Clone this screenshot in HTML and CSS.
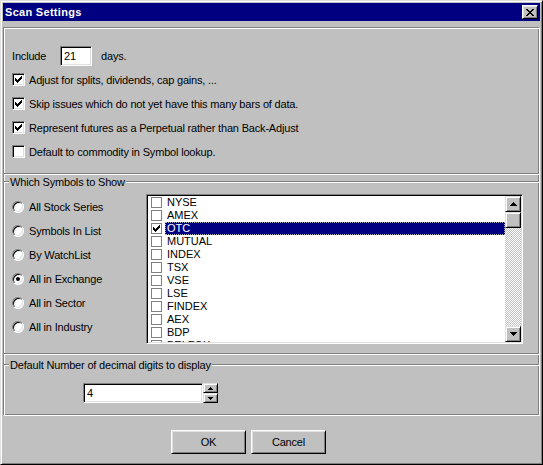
FILE: index.html
```html
<!DOCTYPE html>
<html>
<head>
<meta charset="utf-8">
<title>Scan Settings</title>
<link rel="stylesheet" href="styles.css">
</head>
<body>
<div class="window">
  <div class="titlebar">
    <span class="title">Scan Settings</span>
    <span class="close"><svg width="8" height="7" viewBox="0 0 8 7" shape-rendering="crispEdges"><path d="M0 0h2v1H0zM6 0h2v1H6zM1 1h2v1H1zM5 1h2v1H5zM2 2h4v1H2zM3 3h2v1H3zM2 4h4v1H2zM1 5h2v1H1zM5 5h2v1H5zM0 6h2v1H0zM6 6h2v1H6z" fill="#000"/></svg></span>
  </div>

  <div class="panel">
    <div class="general">
      <div class="include-row">
        <span class="include-label">Include</span>
        <span class="field days-field">21</span>
        <span class="days-label">days.</span>
      </div>
      <div class="checks">
        <div class="check-row"><span class="checkbox"><svg width="7" height="7" viewBox="0 0 7 7" shape-rendering="crispEdges"><path d="M6 0h1v1H6zM5 1h2v1H5zM0 2h1v1H0zM4 2h3v1H4zM0 3h2v1H0zM3 3h3v1H3zM0 4h5v1H0zM1 5h3v1H1zM2 6h1v1H2z"/></svg></span><span>Adjust for splits, dividends, cap gains, ...</span></div>
        <div class="check-row"><span class="checkbox"><svg width="7" height="7" viewBox="0 0 7 7" shape-rendering="crispEdges"><path d="M6 0h1v1H6zM5 1h2v1H5zM0 2h1v1H0zM4 2h3v1H4zM0 3h2v1H0zM3 3h3v1H3zM0 4h5v1H0zM1 5h3v1H1zM2 6h1v1H2z"/></svg></span><span>Skip issues which do not yet have this many bars of data.</span></div>
        <div class="check-row"><span class="checkbox"><svg width="7" height="7" viewBox="0 0 7 7" shape-rendering="crispEdges"><path d="M6 0h1v1H6zM5 1h2v1H5zM0 2h1v1H0zM4 2h3v1H4zM0 3h2v1H0zM3 3h3v1H3zM0 4h5v1H0zM1 5h3v1H1zM2 6h1v1H2z"/></svg></span><span>Represent futures as a Perpetual rather than Back-Adjust</span></div>
        <div class="check-row"><span class="checkbox"></span><span>Default to commodity in Symbol lookup.</span></div>
      </div>
    </div>

    <div class="sep"></div>

    <div class="symbols">
      <div class="group-title"><span class="gline gline-left"></span><span class="gtext">Which Symbols to Show</span><span class="gline gline-right"></span></div>
      <div class="symbols-body">
        <div class="radios">
          <div class="radio-row"><span class="radio"></span><span>All Stock Series</span></div>
          <div class="radio-row"><span class="radio"></span><span>Symbols In List</span></div>
          <div class="radio-row"><span class="radio"></span><span>By WatchList</span></div>
          <div class="radio-row"><span class="radio radio-on"><span class="dot"></span></span><span>All in Exchange</span></div>
          <div class="radio-row"><span class="radio"></span><span>All in Sector</span></div>
          <div class="radio-row"><span class="radio"></span><span>All in Industry</span></div>
        </div>
        <div class="listbox">
          <div class="items">
            <div class="item"><span class="lcheck"></span><span class="ltext">NYSE</span></div>
            <div class="item"><span class="lcheck"></span><span class="ltext">AMEX</span></div>
            <div class="item"><span class="lcheck"><svg width="7" height="7" viewBox="0 0 7 7" shape-rendering="crispEdges"><path d="M6 0h1v1H6zM5 1h2v1H5zM0 2h1v1H0zM4 2h3v1H4zM0 3h2v1H0zM3 3h3v1H3zM0 4h5v1H0zM1 5h3v1H1zM2 6h1v1H2z"/></svg></span><span class="ltext selected">OTC</span></div>
            <div class="item"><span class="lcheck"></span><span class="ltext">MUTUAL</span></div>
            <div class="item"><span class="lcheck"></span><span class="ltext">INDEX</span></div>
            <div class="item"><span class="lcheck"></span><span class="ltext">TSX</span></div>
            <div class="item"><span class="lcheck"></span><span class="ltext">VSE</span></div>
            <div class="item"><span class="lcheck"></span><span class="ltext">LSE</span></div>
            <div class="item"><span class="lcheck"></span><span class="ltext">FINDEX</span></div>
            <div class="item"><span class="lcheck"></span><span class="ltext">AEX</span></div>
            <div class="item"><span class="lcheck"></span><span class="ltext">BDP</span></div>
            <div class="item"><span class="lcheck"></span><span class="ltext">BELFOX</span></div>
          </div>
          <div class="scrollbar">
            <span class="sbtn"><svg width="7" height="4" viewBox="0 0 7 4" shape-rendering="crispEdges"><path d="M3 0h1v1H3zM2 1h3v1H2zM1 2h5v1H1zM0 3h7v1H0z"/></svg></span>
            <span class="sbtn thumb"></span>
            <span class="track"></span>
            <span class="sbtn"><svg width="7" height="4" viewBox="0 0 7 4" shape-rendering="crispEdges"><path d="M0 0h7v1H0zM1 1h5v1H1zM2 2h3v1H2zM3 3h1v1H3z"/></svg></span>
          </div>
        </div>
      </div>
    </div>

    <div class="sep"></div>

    <div class="digits">
      <div class="group-title"><span class="gline gline-left"></span><span class="gtext">Default Number of decimal digits to display</span><span class="gline gline-right"></span></div>
      <div class="spin-row">
        <span class="field spin-field">4</span>
        <span class="spin-buttons">
          <span class="spin-btn"><svg width="5" height="3" viewBox="0 0 5 3" shape-rendering="crispEdges"><path d="M2 0h1v1H2zM1 1h3v1H1zM0 2h5v1H0z"/></svg></span>
          <span class="spin-btn"><svg width="5" height="3" viewBox="0 0 5 3" shape-rendering="crispEdges"><path d="M0 0h5v1H0zM1 1h3v1H1zM2 2h1v1H2z"/></svg></span>
        </span>
      </div>
    </div>
  </div>

  <div class="buttons">
    <span class="button">OK</span>
    <span class="button">Cancel</span>
  </div>
</div>
</body>
</html>
```

FILE: styles.css
```css
* { box-sizing: border-box; }
html, body { margin: 0; padding: 0; }
body {
  background: #c0c0c0;
  font-family: "Liberation Sans", Arial, sans-serif;
  font-size: 11px;
  letter-spacing: -0.18px;
  color: #000;
}
.window {
  width: 543px;
  height: 465px;
  background: #c0c0c0;
  border: 1px solid;
  border-color: #dfdfdf #000 #000 #dfdfdf;
  box-shadow: inset 1px 1px #fff, inset -1px -1px #808080;
  padding: 2px;
  display: flex;
  flex-direction: column;
}
.titlebar {
  height: 18px;
  background: #000080;
  display: flex;
  align-items: center;
  justify-content: space-between;
  padding: 0 2px;
}
.title { color: #fff; font-weight: bold; font-size: 11px; letter-spacing: 0.3px; }
.close {
  width: 16px;
  height: 14px;
  background: #c0c0c0;
  border: 1px solid;
  border-color: #fff #000 #000 #fff;
  box-shadow: inset 1px 1px #dfdfdf, inset -1px -1px #808080;
  display: flex;
  align-items: center;
  justify-content: center;
}
.panel {
  margin-top: 6px;
  border: 1px solid;
  border-color: #808080 #fff #fff #808080;
  box-shadow: inset 1px 1px #fff, inset -1px -1px #808080;
}
.general { padding: 18px 8px 15px; }
.include-row { display: flex; align-items: center; height: 20px; }
.include-label { width: 48px; }
.field {
  background: #fff;
  border: 1px solid;
  border-color: #808080 #fff #fff #808080;
  box-shadow: inset 1px 1px #000, inset -1px -1px #dfdfdf;
  display: flex;
  align-items: center;
  padding-left: 3px;
  height: 20px;
}
.days-field { width: 32px; }
.days-label { margin-left: 9px; }
.checks { display: flex; flex-direction: column; gap: 11px; margin-top: 7px; }
.check-row { display: flex; align-items: center; height: 13px; gap: 4px; }
.checkbox {
  width: 13px;
  height: 13px;
  flex: none;
  background: #fff;
  border: 1px solid;
  border-color: #808080 #fff #fff #808080;
  box-shadow: inset 1px 1px #000, inset -1px -1px #dfdfdf;
  display: flex;
  align-items: center;
  justify-content: center;
}
.sep {
  height: 2px;
  border-top: 1px solid #808080;
  border-bottom: 1px solid #fff;
}
.group-title { display: flex; align-items: center; height: 13px; }
.gline {
  height: 2px;
  border-top: 1px solid #808080;
  border-bottom: 1px solid #fff;
}
.gline-left { width: 5px; }
.gline-right { flex: 1; }
.gtext { padding: 0 1px; }
.symbols-body { display: flex; margin-top: 6px; padding: 0 0 9px 8px; }
.radios { width: 134px; padding-top: 6px; display: flex; flex-direction: column; gap: 11px; }
.radio-row { display: flex; align-items: center; height: 13px; gap: 5px; }
.radio {
  width: 12px;
  height: 12px;
  flex: none;
  border-radius: 50%;
  background: #fff;
  border: 1px solid;
  border-color: #808080 #fff #fff #808080;
  box-shadow: inset 1px 1px #000, inset -1px -1px #dfdfdf;
  display: flex;
  align-items: center;
  justify-content: center;
}
.dot { width: 4px; height: 4px; border-radius: 50%; background: #000; }
.listbox {
  width: 377px;
  height: 150px;
  background: #fff;
  border: 1px solid;
  border-color: #808080 #fff #fff #808080;
  box-shadow: inset 1px 1px #000, inset -1px -1px #dfdfdf;
  padding: 1px;
  display: flex;
}
.items { flex: 1; overflow: hidden; }
.item { display: flex; align-items: center; height: 13px; }
.lcheck {
  width: 11px;
  height: 11px;
  margin-left: 3px;
  flex: none;
  border: 1px solid #808080;
  background: #fff;
  display: flex;
  align-items: center;
  justify-content: center;
}
.ltext { flex: 1; margin-left: 3px; padding: 0 2px; height: 13px; line-height: 13px; letter-spacing: 0; }
.selected { background: #000080; color: #fff; outline: 1px dotted #b0b0b0; outline-offset: -1px; }
.scrollbar { width: 16px; display: flex; flex-direction: column; }
.sbtn {
  width: 16px;
  height: 16px;
  flex: none;
  background: #c0c0c0;
  border: 1px solid;
  border-color: #dfdfdf #000 #000 #dfdfdf;
  box-shadow: inset 1px 1px #fff, inset -1px -1px #808080;
  display: flex;
  align-items: center;
  justify-content: center;
}
.track {
  flex: 1;
  background: repeating-conic-gradient(#fff 0 25%, #c0c0c0 0 50%) 0 0 / 2px 2px;
}
.digits { padding-bottom: 12px; }
.digits .group-title { margin-top: 3px; }
.spin-row { display: flex; margin-top: 12px; padding-left: 79px; }
.spin-field { width: 120px; }
.spin-buttons { width: 15px; height: 20px; display: flex; flex-direction: column; }
.spin-btn {
  height: 10px;
  background: #c0c0c0;
  border: 1px solid;
  border-color: #dfdfdf #000 #000 #dfdfdf;
  box-shadow: inset 1px 1px #fff, inset -1px -1px #808080;
  display: flex;
  align-items: center;
  justify-content: center;
}
.buttons { display: flex; gap: 5px; margin-top: 14px; padding-left: 168px; }
.button {
  width: 75px;
  height: 24px;
  background: #c0c0c0;
  border: 1px solid;
  border-color: #fff #000 #000 #fff;
  box-shadow: inset 1px 1px #dfdfdf, inset -1px -1px #808080;
  display: flex;
  align-items: center;
  justify-content: center;
}
```
